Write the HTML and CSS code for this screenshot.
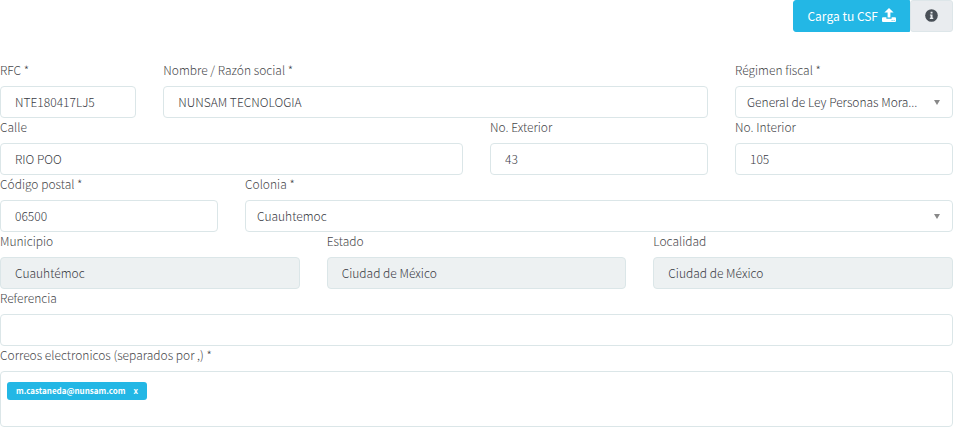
FILE: index.html
```html
<!DOCTYPE html>
<html lang="es">
<head>

    <meta charset="UTF-8">
    <title>Datos fiscales</title>

    <meta name="viewport" content="width=device-width, initial-scale=1">

    <link rel="stylesheet" href="styles.css">

</head>
<body>

    <form class="fiscal-form">

        <div class="toolbar">
            <button type="button" class="btn btn-primary">
                Carga tu CSF
                <svg class="icon-upload" viewBox="0 0 14 14" aria-hidden="true">
                    <path d="M7 0 L11.6 4.6 H8.4 V9.6 H5.6 V4.6 H2.4 Z"/>
                    <path d="M1 9.2 H4.4 V10.8 H9.6 V9.2 H13 Q14 9.2 14 10.2 V13 Q14 14 13 14 H1 Q0 14 0 13 V10.2 Q0 9.2 1 9.2 Z"/>
                    <path class="led" d="M9.6 12 H10.6 V12.8 H9.6 Z M11.6 12 H12.6 V12.8 H11.6 Z"/>
                </svg>
            </button>
            <button type="button" class="btn btn-info" aria-label="Información">
                <svg class="icon-info" viewBox="0 0 14 14" aria-hidden="true">
                    <circle cx="7" cy="7" r="6.8"/>
                    <path class="mark" d="M6 2.9 H8.1 V4.9 H6 Z M5.3 5.8 H8.1 V9.4 H8.9 V10.7 H5.2 V9.4 H6 V7.1 H5.3 Z"/>
                </svg>
            </button>
        </div>

        <div class="grid">

            <div class="field col-2">
                <label for="rfc">RFC *</label>
                <input type="text" id="rfc" class="control" value="NTE180417LJ5">
            </div>

            <div class="field col-7">
                <label for="nombre">Nombre / Razón social *</label>
                <input type="text" id="nombre" class="control" value="NUNSAM TECNOLOGIA">
            </div>

            <div class="field col-3">
                <label for="regimen">Régimen fiscal *</label>
                <div class="select">
                    <select id="regimen" class="control">
                        <option>General de Ley Personas Mora...</option>
                    </select>
                </div>
            </div>

            <div class="field col-6">
                <label for="calle">Calle</label>
                <input type="text" id="calle" class="control" value="RIO POO">
            </div>

            <div class="field col-3">
                <label for="exterior">No. Exterior</label>
                <input type="text" id="exterior" class="control" value="43">
            </div>

            <div class="field col-3">
                <label for="interior">No. Interior</label>
                <input type="text" id="interior" class="control" value="105">
            </div>

            <div class="field col-3">
                <label for="cp">Código postal *</label>
                <input type="text" id="cp" class="control" value="06500">
            </div>

            <div class="field col-9">
                <label for="colonia">Colonia *</label>
                <div class="select">
                    <select id="colonia" class="control">
                        <option>Cuauhtemoc</option>
                    </select>
                </div>
            </div>

            <div class="field col-4">
                <label for="municipio">Municipio</label>
                <input type="text" id="municipio" class="control" value="Cuauhtémoc" readonly>
            </div>

            <div class="field col-4">
                <label for="estado">Estado</label>
                <input type="text" id="estado" class="control" value="Ciudad de México" readonly>
            </div>

            <div class="field col-4">
                <label for="localidad">Localidad</label>
                <input type="text" id="localidad" class="control" value="Ciudad de México" readonly>
            </div>

            <div class="field col-12">
                <label for="referencia">Referencia</label>
                <input type="text" id="referencia" class="control">
            </div>

            <div class="field col-12">
                <label for="correos">Correos electronicos (separados por ,) *</label>
                <div class="tags">
                    <span class="tag">m.castaneda@nunsam.com <button type="button" class="tag-remove">x</button></span>
                    <input type="text" id="correos" class="tags-input">
                </div>
            </div>

        </div>

    </form>

</body>
</html>
```

FILE: styles.css
```css
*,
*:before,
*:after {
    box-sizing: border-box;
}

body {
    margin: 0;
    background: #fff;
    color: #47484b;
}

body,
button,
input,
select {
    font-family: "Noto Sans CJK SC", "Open Sans", sans-serif;
    font-size: 12px;
    font-weight: 300;
}

.toolbar {
    display: flex;
    justify-content: flex-end;
    margin-bottom: 29px;
}

.btn {
    display: flex;
    align-items: center;
    justify-content: center;
    gap: 4px;
    height: 32px;
    padding: 0 14px 2px;
    border: 1px solid #23b7e5;
    border-radius: 3px;
    cursor: pointer;
}

.btn-primary {
    padding: 0 13px 2px;
    background: #23b7e5;
    color: #fff;
    font-weight: 400;
    border-radius: 3px 0 0 3px;
}

.btn-info {
    background: #e9ecef;
    border-color: #dde6e9;
    color: #495057;
}

.icon-upload {
    width: 14px;
    height: 14px;
    fill: currentColor;
}

.icon-info {
    width: 13px;
    height: 13px;
    fill: currentColor;
}

.icon-upload .led {
    fill: #23b7e5;
}

.icon-info .mark {
    fill: #e9ecef;
}

.grid {
    display: grid;
    grid-template-columns: repeat(12, minmax(0, 1fr));
    column-gap: 27px;
}

.col-2 { grid-column: span 2; }
.col-3 { grid-column: span 3; }
.col-4 { grid-column: span 4; }
.col-6 { grid-column: span 6; }
.col-7 { grid-column: span 7; }
.col-9 { grid-column: span 9; }
.col-12 { grid-column: span 12; }

.field label {
    display: block;
    height: 25px;
    line-height: 18px;
    white-space: nowrap;
}

.control {
    display: block;
    width: 100%;
    height: 32px;
    margin: 0;
    padding: 0 14px 2px;
    border: 1px solid #dbe6e8;
    border-radius: 4px;
    background: #fff;
    color: #393b44;
    outline: 0;
}

.control:read-only:not(select) {
    background: #edf1f2;
}

.control:focus {
    border-color: #66afe9;
}

.select {
    position: relative;
}

.select .control {
    appearance: none;
    padding: 0 30px 1px 11px;
    text-overflow: ellipsis;
}

.select:after {
    content: "";
    position: absolute;
    top: 14px;
    right: 13px;
    border: 3px solid transparent;
    border-top: 5px solid #888;
    border-bottom: 0;
    pointer-events: none;
}

.tags {
    display: flex;
    flex-wrap: wrap;
    align-items: flex-start;
    min-height: 56px;
    padding: 10px 6px;
    border: 1px solid #dbe6e8;
    border-radius: 4px;
}

.tag {
    display: flex;
    align-items: center;
    gap: 8px;
    height: 18px;
    padding: 0 9px 1px;
    border-radius: 3px;
    background: #23b7e5;
    color: #fff;
    font-size: 8px;
    font-weight: 700;
}

.tag-remove {
    padding: 0;
    border: 0;
    background: none;
    color: inherit;
    font-size: 8px;
    font-weight: 700;
    cursor: pointer;
}

.tags-input {
    flex: 1;
    min-width: 60px;
    height: 18px;
    padding: 0 9px;
    border: 0;
    outline: 0;
}
```
